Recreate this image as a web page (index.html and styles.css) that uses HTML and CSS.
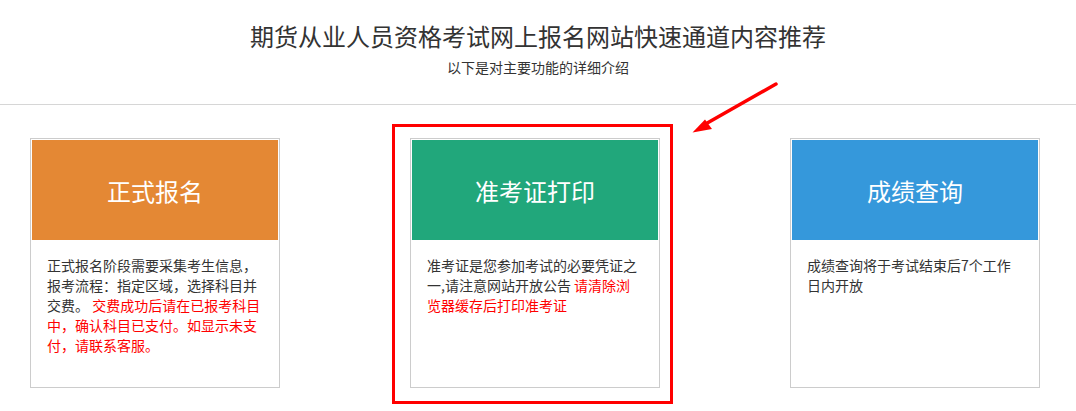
FILE: index.html
```html
<!DOCTYPE html>
<html lang="zh-CN">
<head>
  <meta charset="UTF-8" />
  <meta name="viewport" content="width=device-width, initial-scale=1.0"/>
  <title>期货从业人员资格考试网上报名网站快速通道</title>
  <link rel="stylesheet" href="styles.css">
</head>
<body>

  <div class="top">
    <h1>期货从业人员资格考试网上报名网站快速通道内容推荐</h1>
    <p class="sub">以下是对主要功能的详细介绍</p>
  </div>

  <div class="cards">
    <div class="card">
      <div class="card-head orange">正式报名</div>
      <div class="card-body">
        正式报名阶段需要采集考生信息，报考流程：指定区域，选择科目并交费。 <span class="red">交费成功后请在已报考科目中，确认科目已支付。如显示未支付，请联系客服。</span>
      </div>
    </div>

    <div class="card marked">
      <div class="card-head green">准考证打印</div>
      <div class="card-body">
        准考证是您参加考试的必要凭证之一,请注意网站开放公告 <span class="red">请清除浏览器缓存后打印准考证</span>
      </div>
      <div class="red-box"></div>
    </div>

    <div class="card">
      <div class="card-head blue">成绩查询</div>
      <div class="card-body">
        成绩查询将于考试结束后7个工作日内开放
      </div>
    </div>
  </div>

  <!-- annotation arrow -->
  <svg class="arrow" width="110" height="70" viewBox="0 0 110 70">
    <line x1="96" y1="9" x2="22" y2="51" stroke="#ff0000" stroke-width="3.5" stroke-linecap="round"/>
    <polygon points="12.5,57.5 25,44.5 32,54" fill="#ff0000"/>
  </svg>

</body>
</html>
```

FILE: styles.css
```css
body {
  font-family: "Microsoft YaHei", "Noto Sans CJK SC", "Noto Sans", sans-serif;
  background: #fff;
  color: #333;
  margin: 0;
  padding: 0;
  position: relative;
  min-height: 411px;
}

.top {
  text-align: center;
  padding: 21px 0 27px;
  border-bottom: 1px solid #d6d6d6;
}

.top h1 {
  margin: 0;
  font-size: 24px;
  line-height: 30px;
  font-weight: normal;
  color: #333;
}

.sub {
  margin: 6px 0 0;
  font-size: 14px;
  line-height: 20px;
  color: #333;
}

.cards {
  display: flex;
  align-items: flex-start;
  gap: 130px;
  padding: 33px 0 24px 30px;
}

.card {
  position: relative;
  flex: none;
  width: 250px;
  height: 250px;
  box-sizing: border-box;
  border: 1px solid #ccc;
  padding: 1px;
}

.card-head {
  height: 100px;
  display: flex;
  align-items: center;
  justify-content: center;
  color: #fff;
  font-size: 24px;
}

.orange {
  background: #e48834;
}

.green {
  background: #21a77b;
}

.blue {
  background: #3598db;
}

.card-body {
  padding: 15px 15px 0;
  font-size: 14px;
  line-height: 20px;
  color: #333;
}

.red {
  color: #ff0000;
}

.red-box {
  position: absolute;
  left: -19px;
  top: -15px;
  width: 281px;
  height: 280px;
  box-sizing: border-box;
  border: 3px solid #ff0000;
}

.arrow {
  position: absolute;
  left: 680px;
  top: 75px;
}
```
